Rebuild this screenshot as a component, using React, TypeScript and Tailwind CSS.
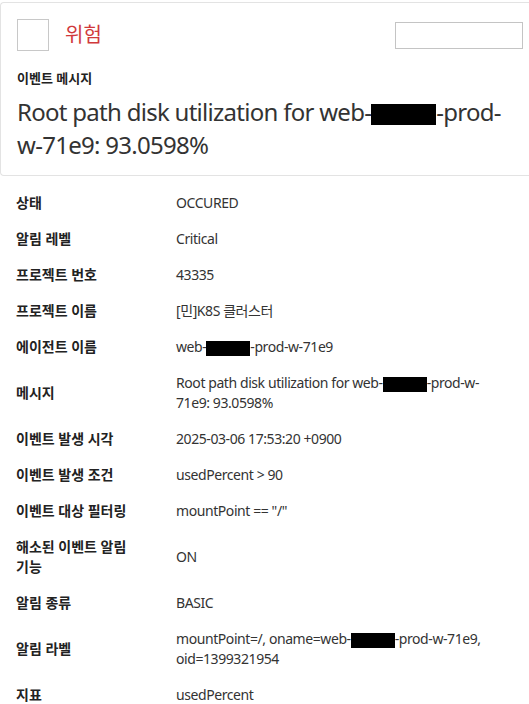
import React from "react";

const Redacted = ({ w, h }: { w: number; h: number }) => (
  <span className="inline-block bg-black align-middle" style={{ width: w, height: h }} />
);

const rows: { label: string; value: React.ReactNode }[] = [
  { label: "상태", value: "OCCURED" },
  { label: "알림 레벨", value: "Critical" },
  { label: "프로젝트 번호", value: "43335" },
  { label: "프로젝트 이름", value: "[민]K8S 클러스터" },
  {
    label: "에이전트 이름",
    value: (
      <>
        web-<Redacted w={44} h={15} />-prod-w-71e9
      </>
    ),
  },
  {
    label: "메시지",
    value: (
      <>
        Root path disk utilization for web-<Redacted w={44} h={15} />-prod-w-71e9: 93.0598%
      </>
    ),
  },
  { label: "이벤트 발생 시각", value: "2025-03-06 17:53:20 +0900" },
  { label: "이벤트 발생 조건", value: "usedPercent > 90" },
  { label: "이벤트 대상 필터링", value: 'mountPoint == "/"' },
  { label: "해소된 이벤트 알림 기능", value: "ON" },
  { label: "알림 종류", value: "BASIC" },
  {
    label: "알림 라벨",
    value: (
      <>
        mountPoint=/, oname=web-<Redacted w={44} h={15} />-prod-w-71e9, oid=1399321954
      </>
    ),
  },
  { label: "지표", value: "usedPercent" },
];

export default function App() {
  return (
    <div
      className="w-[529px] h-[704px] overflow-hidden bg-white text-[#333]"
      style={{ fontFamily: '"Noto Sans", "Noto Sans CJK KR", sans-serif' }}
    >
      {/* header card */}
      <div className="mt-[2px] mr-[-8px] border-t border-l border-b border-[#e3e3e3] rounded-l-[4px] pb-[14px]">
        <div className="flex items-center justify-between pl-[16px] pr-[14px] pt-[16px]">
          <div className="flex items-center gap-[16px]">
            <div className="w-[32px] h-[32px] border border-[#c8c8c8]" />
            <span className="text-[20px] leading-[28px] text-[#d0393b]">위험</span>
          </div>
          <div className="w-[128px] h-[27px] border border-[#c4c4c4]" />
        </div>
        <div className="px-[16px] mt-[18px]">
          <div className="text-[13px] leading-[18px] font-bold text-[#222]">이벤트 메시지</div>
          <div className="mt-[8px] text-[24px] leading-[33px] tracking-[-0.03em] text-[#333] pr-[16px]">
            Root path disk utilization for web-<Redacted w={65} h={21} />-prod-w-71e9: 93.0598%
          </div>
        </div>
      </div>

      {/* details */}
      <div className="pt-[9px]">
        {rows.map((r) => (
          <div key={r.label} className="flex items-center py-[8px] text-[14px] leading-[20px]">
            <div className="w-[176px] shrink-0 pl-[16px] pr-[22px] font-bold text-[#222] break-keep">{r.label}</div>
            <div className="w-[320px] tracking-[-0.03em] text-[#333]">{r.value}</div>
          </div>
        ))}
      </div>
    </div>
  );
}
